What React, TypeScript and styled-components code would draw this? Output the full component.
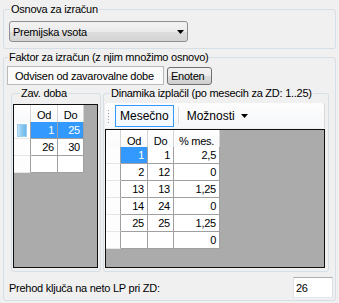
import React from 'react';
import styled, { createGlobalStyle } from 'styled-components';

const GlobalStyle = createGlobalStyle`
  html, body {
    margin: 0;
    padding: 0;
    background: #f0f0f0;
  }
  body {
    font-family: 'Liberation Sans', Arial, sans-serif;
    font-size: 11px;
    letter-spacing: -0.25px;
    color: #000;
  }
  * {
    box-sizing: border-box;
  }
`;

const Page = styled.div`
  width: 339px;
  height: 303px;
  padding: 3px 3px 0 3px;
  display: flex;
  flex-direction: column;
  gap: 2px;
`;

const Group = styled.fieldset<{ $pad: string; $width?: number; $height?: number }>`
  margin: 0;
  padding: ${props => props.$pad};
  border: 1px solid #d5dfe5;
  border-radius: 3px;
  min-width: 0;
  width: ${props => (props.$width ? `${props.$width}px` : 'auto')};
  height: ${props => (props.$height ? `${props.$height}px` : 'auto')};
  display: flex;
  flex-direction: column;
`;

const Caption = styled.legend<{ $indent: number }>`
  margin-left: ${props => props.$indent}px;
  padding: 0 1px;
  line-height: 13px;
  font-size: 11px;
`;

const Combo = styled.div`
  width: 179px;
  height: 21px;
  margin-left: 5px;
  border: 1px solid #8e8f8f;
  border-radius: 3px;
  background: linear-gradient(#f3f3f3 0%, #ebebeb 50%, #dedede 51%, #d4d4d4 100%);
  display: flex;
  align-items: center;
  justify-content: space-between;
  padding: 0 3px 0 3px;
`;

const ArrowDown = () => (
  <svg width='7' height='4' viewBox='0 0 7 4'>
    <path d='M0 0h7L3.5 4z' fill='#000' />
  </svg>
);

const TabStrip = styled.div`
  display: flex;
  align-items: flex-start;
  gap: 3px;
  padding: 2px 0 0 3px;
`;

const Tab = styled.div<{ $active?: boolean }>`
  height: ${props => (props.$active ? '19px' : '18px')};
  margin-top: ${props => (props.$active ? '0' : '1px')};
  padding: ${props => (props.$active ? '0 5px 0 7px' : '0 4px 0 3px')};
  display: flex;
  align-items: center;
  border: 1px solid ${props => (props.$active ? '#b9b9b9' : '#707070')};
  border-radius: ${props => (props.$active ? '0' : '3px')};
  background: ${props =>
    props.$active ? '#fbfbfb' : 'linear-gradient(#f2f2f2 0%, #ebebeb 50%, #dddddd 51%, #cfcfcf 100%)'};
  width: ${props => (props.$active ? '157px' : '45px')};
  white-space: nowrap;
`;

const TabPage = styled.div`
  display: flex;
  gap: 2px;
  padding: 2px 0 0 7px;
`;

const Grid = styled.div`
  flex: 1;
  border: 1px solid #101010;
  background: #ababab;
  display: flex;
  align-items: flex-start;
`;

const Cells = styled.div<{ $cols: string }>`
  display: grid;
  grid-template-columns: ${props => props.$cols};
  grid-auto-rows: 17px;
`;

const HeadCell = styled.div<{ $tall: number }>`
  height: ${props => props.$tall}px;
  background: linear-gradient(#ffffff, #f7f8fa);
  border-right: 1px solid #d5d5d5;
  border-bottom: 1px solid #a0a0a0;
  display: flex;
  align-items: center;
  justify-content: center;
  font-size: 11px;
`;

const RowHead = styled.div`
  background: #fdfdfd;
  border-right: 1px solid #a0a0a0;
  border-bottom: 1px solid #e6e6e6;
  display: flex;
  align-items: center;
  justify-content: center;
`;

const RowMark = styled.span`
  width: 10px;
  height: 13px;
  background: linear-gradient(90deg, #c6e4f7 0%, #8fcaf0 40%, #6cb8ea 100%);
  border: 1px solid #9ccdef;
`;

const Cell = styled.div<{ $selected?: boolean }>`
  background: ${props => (props.$selected ? '#3399ff' : '#ffffff')};
  color: ${props => (props.$selected ? '#ffffff' : '#000000')};
  border-right: 1px solid #a0a0a0;
  border-bottom: 1px solid #a0a0a0;
  display: flex;
  align-items: center;
  justify-content: flex-end;
  padding-right: 3px;
`;

const ToolBar = styled.div`
  height: 25px;
  display: flex;
  align-items: center;
  background: linear-gradient(#fdfdfd, #f6f7f9);
  border-right: 1px solid #d8d8d8;
  border-radius: 3px 3px 0 0;
  padding-left: 2px;
  margin-bottom: 1px;
`;

const Grip = styled.div`
  width: 3px;
  height: 14px;
  margin-right: 5px;
  background-image: radial-gradient(circle, #9a9a9a 0.8px, transparent 1px);
  background-size: 3px 3px;
`;

const ToolButton = styled.div<{ $checked?: boolean }>`
  height: 22px;
  padding: 0 4px;
  display: flex;
  align-items: center;
  gap: 6px;
  border: 1px solid ${props => (props.$checked ? '#3399ff' : 'transparent')};
  background: ${props => (props.$checked ? '#f4faff' : 'transparent')};
  font-size: 12px;
  letter-spacing: 0;
`;

const ToolSep = styled.div`
  width: 1px;
  height: 17px;
  margin: 0 3px 0 4px;
  background: #d8d8d8;
  box-shadow: 1px 0 0 #ffffff;
`;

const Footer = styled.div`
  display: flex;
  align-items: center;
  justify-content: space-between;
  padding: 0 2px 0 5px;
  margin-top: 5px;
`;

const TextInput = styled.div`
  width: 40px;
  height: 21px;
  background: #ffffff;
  border: 1px solid;
  border-color: #abadb3 #dbdfe6 #e3e9ef #e2e3ea;
  display: flex;
  align-items: center;
  padding-left: 2px;
`;

const periods = [
  { od: '1', do: '25' },
  { od: '26', do: '30' },
];

const payouts = [
  { od: '1', do: '1', pct: '2,5' },
  { od: '2', do: '12', pct: '0' },
  { od: '13', do: '13', pct: '1,25' },
  { od: '14', do: '24', pct: '0' },
  { od: '25', do: '25', pct: '1,25' },
  { od: '', do: '', pct: '0' },
];

export default function App() {
  return (
    <>
      <GlobalStyle />
      <Page>
        <Group $pad='5px 0 6px 0'>
          <Caption $indent={6}>Osnova za izračun</Caption>
          <Combo>
            <span>Premijska vsota</span>
            <ArrowDown />
          </Combo>
        </Group>

        <Group $pad='0 0 2px 0'>
          <Caption $indent={4}>Faktor za izračun (z njim množimo osnovo)</Caption>
          <TabStrip>
            <Tab $active>Odvisen od zavarovalne dobe</Tab>
            <Tab>Enoten</Tab>
          </TabStrip>

          <TabPage>
            <Group $pad='4px 2px 3px 1px' $width={90} $height={185}>
              <Caption $indent={7}>Zav. doba</Caption>
              <Grid>
                <Cells $cols='17px 27px 26px'>
                  <HeadCell $tall={21} />
                  <HeadCell $tall={21}>Od</HeadCell>
                  <HeadCell $tall={21}>Do</HeadCell>
                  {periods.map((row, i) => (
                    <React.Fragment key={row.od}>
                      <RowHead>{i === 0 && <RowMark />}</RowHead>
                      <Cell $selected={i === 0}>{row.od}</Cell>
                      <Cell $selected={i === 0}>{row.do}</Cell>
                    </React.Fragment>
                  ))}
                  <RowHead />
                  <Cell />
                  <Cell />
                </Cells>
              </Grid>
            </Group>

            <Group $pad='3px 3px 3px 1px' $width={226} $height={185}>
              <Caption $indent={5}>Dinamika izplačil (po mesecih za ZD: 1..25)</Caption>
              <ToolBar>
                <Grip />
                <ToolButton $checked>Mesečno</ToolButton>
                <ToolSep />
                <ToolButton>
                  Možnosti
                  <ArrowDown />
                </ToolButton>
              </ToolBar>
              <Grid>
                <Cells $cols='15px 27px 26px 46px'>
                  <HeadCell $tall={22} />
                  <HeadCell $tall={22}>Od</HeadCell>
                  <HeadCell $tall={22}>Do</HeadCell>
                  <HeadCell $tall={22}>% mes.</HeadCell>
                  {payouts.map((row, i) => (
                    <React.Fragment key={i}>
                      <RowHead />
                      <Cell $selected={i === 0}>{row.od}</Cell>
                      <Cell>{row.do}</Cell>
                      <Cell>{row.pct}</Cell>
                    </React.Fragment>
                  ))}
                </Cells>
              </Grid>
            </Group>
          </TabPage>

          <Footer>
            <span>Prehod ključa na neto LP pri ZD:</span>
            <TextInput>26</TextInput>
          </Footer>
        </Group>
      </Page>
    </>
  );
}
